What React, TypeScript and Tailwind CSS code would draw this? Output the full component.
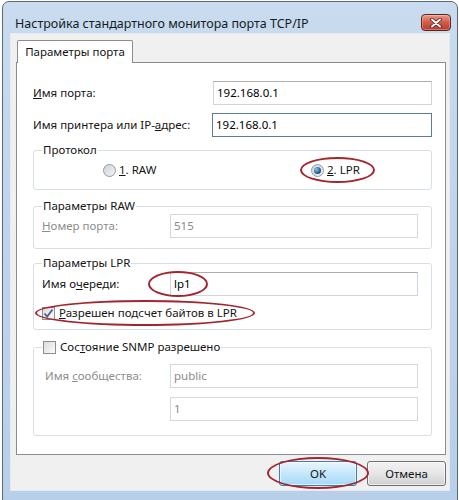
import React from "react";

function Radio({ checked }: { checked?: boolean }) {
  return (
    <span className="relative w-[13px] h-[13px] rounded-full border border-[#8f9aa3] bg-gradient-to-br from-[#cfd3d8] to-[#f3f4f5] flex items-center justify-center shrink-0">
      {checked && (
        <span className="w-[7px] h-[7px] rounded-full bg-[radial-gradient(circle_at_35%_35%,#8fc7f0,#1a5a96_60%,#0d3d6e)]" />
      )}
    </span>
  );
}

function Check({ checked }: { checked?: boolean }) {
  return (
    <span className="w-[13px] h-[13px] border border-[#8e8f8f] bg-gradient-to-br from-[#dcdcdc] to-[#fbfbfb] flex items-center justify-center shrink-0">
      {checked && (
        <svg width="11" height="11" viewBox="0 0 11 11">
          <path d="M1.5 5.5 L4.2 8.5 L9.5 1.5" fill="none" stroke="#4a5f97" strokeWidth="1.8" />
        </svg>
      )}
    </span>
  );
}

function Field({
  value,
  disabled,
  focused,
  width,
}: {
  value: string;
  disabled?: boolean;
  focused?: boolean;
  width: string;
}) {
  const border = focused
    ? "border-[#5a7d9c]"
    : disabled
      ? "border-[#d4d7db]"
      : "border-[#d0d5dc] border-t-[#abadb3]";
  return (
    <div
      className={`${width} h-[24px] border ${border} bg-white px-[3px] flex items-center ${
        disabled ? "text-[#8a8a8a]" : "text-black"
      }`}
    >
      {value}
    </div>
  );
}

function Ellipse({ className }: { className: string }) {
  return (
    <span
      className={`absolute border-2 border-[#a3252d] rounded-[50%] pointer-events-none ${className}`}
    />
  );
}

export default function App() {
  return (
    <div className="w-[459px] h-[500px] bg-white overflow-hidden font-['Noto_Sans',sans-serif] text-[11.5px] leading-[16px] text-[#141414]">
      <div className="ml-[2px] mt-[1px] w-[456px] h-[510px] border border-[#5d6876] rounded-t-[7px] bg-gradient-to-b from-[#c9dbef] via-[#bed4eb] to-[#b7cfe9] px-[7px] flex flex-col">
        {/* title bar */}
        <div className="h-[31px] shrink-0 flex items-start justify-between">
          <span className="pl-[5px] pt-[13px] text-[12.5px] leading-[18px] text-[#141b24]">
            Настройка стандартного монитора порта TCP/IP
          </span>
          <span className="mt-[12px] mr-[-1px] w-[30px] h-[17px] rounded-[4px] border border-[#5e231c] bg-gradient-to-b from-[#e99a8a] via-[#d05a47] to-[#bb3a2a] flex items-center justify-center shadow-[inset_0_0_0_1px_rgba(255,255,255,0.3)]">
            <svg width="12" height="10" viewBox="0 0 12 10">
              <path d="M2 1.5 L10 8.5 M10 1.5 L2 8.5" stroke="#5a1e18" strokeWidth="3.6" strokeLinecap="round" />
              <path d="M2 1.5 L10 8.5 M10 1.5 L2 8.5" stroke="#ffffff" strokeWidth="2" strokeLinecap="round" />
            </svg>
          </span>
        </div>

        {/* client area */}
        <div className="h-[458px] shrink-0 bg-[#f0f0f0] border border-[#e4ebf3] pl-[5px] pr-[3px] pt-[6px] flex flex-col">
          {/* tab header */}
          <div className="flex pl-[1px]">
            <div className="relative z-10 -mb-px w-[116px] h-[23px] bg-white border border-b-0 border-[#898c95] rounded-t-[2px] flex items-center justify-center">
              Параметры порта
            </div>
          </div>

          {/* tab panel */}
          <div className="w-[430px] h-[393px] bg-white border border-[#898c95] pt-[18px] pl-[16px] flex flex-col">
            <div className="flex items-center">
              <span className="w-[180px]">
                <span className="underline">И</span>мя порта:
              </span>
              <Field value="192.168.0.1" width="w-[219px]" />
            </div>
            <div className="flex items-center mt-[8px]">
              <span className="w-[179px]">
                Имя принтера или IP-<span className="underline">а</span>дрес:
              </span>
              <Field value="192.168.0.1" width="w-[220px]" focused />
            </div>

            {/* protocol */}
            <fieldset className="mt-[5px] w-[399px] border border-[#d5dfe5] rounded-[3px] pl-[8px] pt-[4px] pb-[11px]">
              <legend className="px-[1px]">Протокол</legend>
              <div className="flex items-center">
                <div className="ml-[61px] w-[208px] flex items-center gap-[3px]">
                  <Radio />
                  <span>
                    <span className="underline">1</span>. RAW
                  </span>
                </div>
                <div className="relative flex items-center gap-[3px]">
                  <Radio checked />
                  <span>
                    <span className="underline">2</span>. LPR
                  </span>
                  <Ellipse className="-left-[11px] -top-[5px] w-[75px] h-[26px]" />
                </div>
              </div>
            </fieldset>

            {/* RAW */}
            <fieldset className="mt-[8px] w-[399px] border border-[#d5dfe5] rounded-[3px] pl-[8px] pb-[10px]">
              <legend className="px-[1px]">Параметры RAW</legend>
              <div className="flex items-center">
                <span className="w-[128px] text-[#8d8d8d]">
                  <span className="underline">Н</span>омер порта:
                </span>
                <Field value="515" width="w-[248px]" disabled />
              </div>
            </fieldset>

            {/* LPR */}
            <fieldset className="mt-[6px] w-[399px] border border-[#d5dfe5] rounded-[3px] pl-[8px] pt-[1px] pb-[8px]">
              <legend className="px-[1px]">Параметры LPR</legend>
              <div className="relative flex items-center">
                <span className="w-[128px]">
                  Имя о<span className="underline">ч</span>ереди:
                </span>
                <Field value="lp1" width="w-[248px]" />
                <Ellipse className="left-[106px] -top-[1px] w-[60px] h-[26px]" />
              </div>
              <div className="relative mt-[9px] flex items-center gap-[4px]">
                <Check checked />
                <span>
                  <span className="underline">Р</span>азрешен подсчет байтов в LPR
                </span>
                <Ellipse className="-left-[7px] -top-[5px] w-[220px] h-[26px]" />
              </div>
            </fieldset>

            {/* SNMP */}
            <fieldset className="mt-[9px] w-[399px] border border-[#d5dfe5] rounded-[3px] pl-[8px] pt-[9px] pb-[14px]">
              <legend className="px-[1px] flex items-center gap-[4px]">
                <Check />
                <span>
                  Сос<span className="underline">т</span>ояние SNMP разрешено
                </span>
              </legend>
              <div className="flex items-center">
                <span className="w-[128px] pl-[3px] text-[#8d8d8d]">
                  Имя <span className="underline">с</span>ообщества:
                </span>
                <Field value="public" width="w-[248px]" disabled />
              </div>
              <div className="flex items-center mt-[9px] pl-[128px]">
                <Field value="1" width="w-[248px]" disabled />
              </div>
            </fieldset>
          </div>

          {/* buttons */}
          <div className="mt-[6px] flex justify-end gap-[10px]">
            <div className="relative">
              <button className="w-[78px] h-[25px] rounded-[3px] border border-[#3c7fb1] bg-gradient-to-b from-[#eaf6fd] via-[#c4e7fb] to-[#a7d9f5] shadow-[inset_0_0_0_1px_rgba(255,255,255,0.6)] text-[#141414]">
                OK
              </button>
              <Ellipse className="-left-[12px] -top-[4px] w-[102px] h-[32px]" />
            </div>
            <button className="w-[79px] h-[25px] rounded-[3px] border border-[#707070] bg-gradient-to-b from-[#f2f2f2] via-[#e6e6e6] to-[#d0d0d0] shadow-[inset_0_0_0_1px_rgba(255,255,255,0.6)] text-[#141414]">
              Отмена
            </button>
          </div>
        </div>
      </div>
    </div>
  );
}
